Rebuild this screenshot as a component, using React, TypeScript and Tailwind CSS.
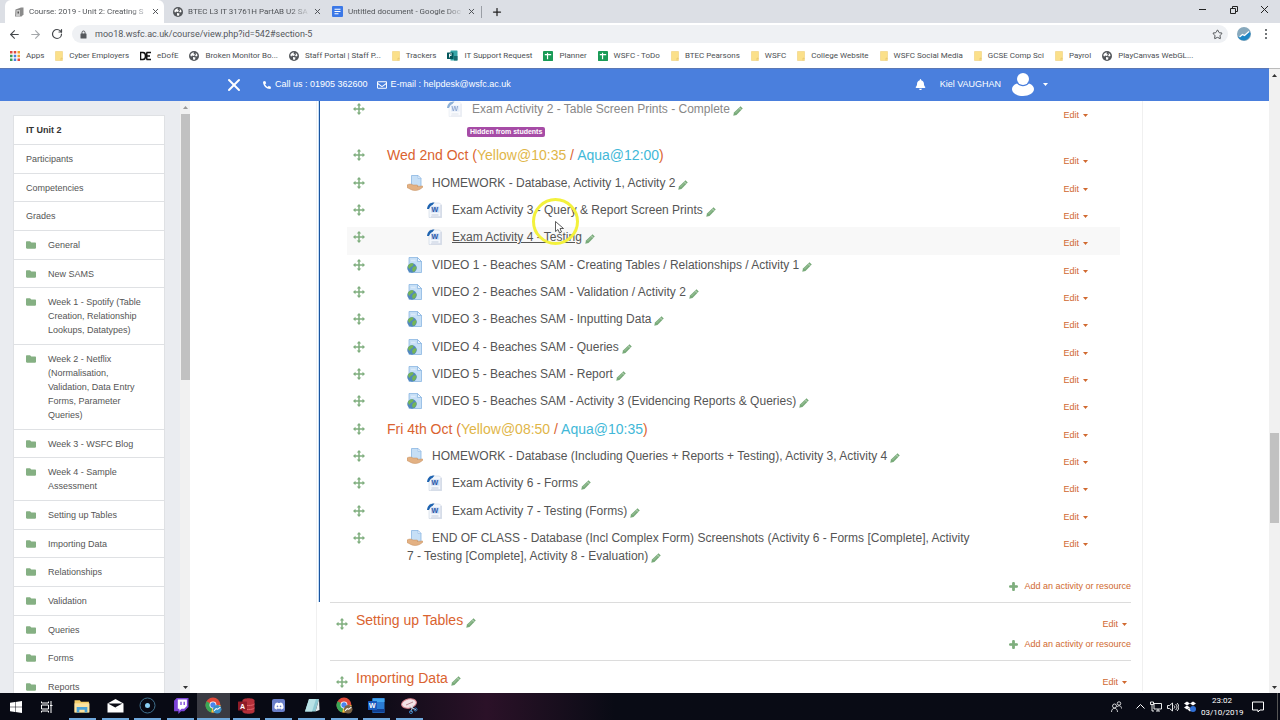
import type { ReactNode } from "react";
import { FaBell, FaFolder, FaPhoneAlt, FaPlus, FaRegEnvelope, FaDiscord } from "react-icons/fa";
import { ArrowLeft, ArrowRight, Plus, RotateCw, Star, X } from "lucide-react";

const uiFont = "font-[Roboto,'Open_Sans',sans-serif]";
const pageFont = "font-['Liberation_Sans',Arial,sans-serif]";

/* ---------- icons ---------- */

function Globe() {
  return (
    <svg viewBox="0 0 20 20" className="size-[10px] shrink-0">
      <circle cx="10" cy="10" r="10" fill="#54575b" />
      <path d="M3 7c2-3 4-4 7-4l-1 3 3 1-2 3-4-1-1 2-2-1zM13 4l3 2 1 4-3 1-2-2 2-2zM8 12l5 1-1 4-3 1-1-3z" fill="#fff" />
    </svg>
  );
}

function BookmarkFolder() {
  return (
    <svg viewBox="0 0 16 20" className="h-[10px] w-[8px] shrink-0">
      <path d="M1 1h14v18H1z" fill="#fbe08a" stroke="#eccb6c" />
      <path d="M12 19v-5l3 1" stroke="#dcb95a" fill="none" />
    </svg>
  );
}

function Sheet() {
  return (
    <svg viewBox="0 0 22 22" className="size-[10px] shrink-0">
      <rect width="22" height="22" rx="1" fill="#1a9b57" />
      <path d="M4 8h14M10 4v14" stroke="#fff" strokeWidth="2.6" />
    </svg>
  );
}

function FormsLogo() {
  return (
    <svg viewBox="0 0 22 22" className="size-[11px] shrink-0">
      <rect x="7" y="1" width="14" height="20" rx="1" fill="#37a6a8" />
      <path d="M14 12h7v8a1 1 0 0 1-1 1h-6z" fill="#1a6d70" />
      <rect x="0" y="5" width="13" height="13" rx="1" fill="#03575b" />
      <path d="M5 15V8h5M5 11h4" stroke="#fff" strokeWidth="1.8" fill="none" />
    </svg>
  );
}

function AppsGrid() {
  const dots = ["#e04a3f", "#e04a3f", "#f0a030", "#3d9b57", "#4a7fdf", "#f0a030", "#3d9b57", "#4a7fdf", "#e04a3f"];
  return (
    <svg viewBox="0 0 20 20" className="size-[10px] shrink-0">
      {dots.map((c, i) => (
        <rect key={i} x={(i % 3) * 7.5} y={Math.floor(i / 3) * 7.5} width="5" height="5" fill={c} />
      ))}
    </svg>
  );
}

function DofE() {
  return (
    <svg viewBox="0 0 22 20" className="h-[10px] w-[11px] shrink-0">
      <path d="M1 3h5a5 7 0 0 1 0 14H1zM13 3h9M13 10h7M13 17h9M13.500 3v14" stroke="#111" strokeWidth="3" fill="none" />
    </svg>
  );
}

function CoursePage() {
  return (
    <svg viewBox="0 0 20 20" className="size-[10px] shrink-0">
      <path d="M3 5 14 1h5v14l-4 4H2z" fill="#8b8b8b" />
      <path d="M5 6h7v12H4z" fill="#c9c9c9" />
      <path d="M7 9h3v4H7z" fill="#555" />
    </svg>
  );
}

function DocsLogo() {
  return (
    <svg viewBox="0 0 22 22" className="size-[11px] shrink-0">
      <rect width="22" height="22" rx="2" fill="#3b78e7" />
      <path d="M5 6.500h12M5 11h12M5 15.500h8" stroke="#fff" strokeWidth="2" />
    </svg>
  );
}

function Padlock() {
  return (
    <svg viewBox="0 0 14 18" className="mr-2 h-[9px] w-[7px] shrink-0">
      <rect x="1" y="7" width="12" height="10" rx="1" fill="#55585c" />
      <path d="M4 8V5a3 3 0 0 1 6 0v3" fill="none" stroke="#55585c" strokeWidth="2" />
    </svg>
  );
}

function Move() {
  return (
    <svg viewBox="0 0 24 24" className="size-[12px] shrink-0 text-[#7fae7e]" fill="currentColor">
      <path d="M12 0 16.500 5H13.500V10.500H19V7.500l5 4.500-5 4.500v-3H13.500V19h3L12 24l-4.500-5h3V13.500H5v3L0 12l5-4.500v3h5.500V5h-3z" />
    </svg>
  );
}

function Pencil() {
  return (
    <svg viewBox="0 0 20 20" className="ml-[3px] inline-block size-[10px] align-[-3px]">
      <path d="M15 .5 19.500 5 7 18 .5 19.500 2 13z" fill="#78aa79" />
      <path d="m5 14 9.500-9.500" stroke="#b4d2b2" strokeWidth="1.400" />
      <path d="m12 3 5 5" stroke="#fff" strokeWidth="1" />
    </svg>
  );
}

function WordFile({ dim }: { dim?: boolean }) {
  return (
    <svg viewBox="0 0 32 32" className={`mr-[9px] inline-block size-[16px] align-[-4px] ${dim ? "opacity-50" : ""}`}>
      <path d="M6 2h19l4 4v25H4V8z" fill="#f4f7fc" stroke="#c3cddd" />
      <path d="M28 6v24H8" stroke="#d3dae6" strokeWidth="3" fill="none" />
      <path d="M0 14C1 5 6 1 15 1L11 6C8 7 6 9 4 14z" fill="#1e63b0" />
      <rect x="8" y="9" width="17" height="12" fill="#c9dbf3" />
      <text x="9" y="20" fontSize="14" fontWeight="bold" fontFamily="Liberation Sans" fill="#2a57a8">W</text>
      <path d="M9 26h14" stroke="#c3cddd" strokeWidth="2" />
    </svg>
  );
}

function UrlFile() {
  return (
    <svg viewBox="0 0 32 32" className="mr-[9px] inline-block size-[16px] align-[-4px]">
      <path d="M4 1h17l8 8v22H4z" fill="#c6dff6" stroke="#86b3e0" strokeWidth="1.500" />
      <path d="M21 1v8h8z" fill="#eef6fd" stroke="#86b3e0" strokeWidth="1.500" />
      <path d="M8 7h9" stroke="#dcebfa" strokeWidth="3" />
      <circle cx="10" cy="22" r="9.500" fill="#5288bd" />
      <path d="M2 18c2-4 6-6 10-5l1 3-3 3-3 1-1 4-3-2zM12 20l6-2 1 4-3 6-4 2-2-5z" fill="#74b556" />
    </svg>
  );
}

function AssignFile() {
  return (
    <svg viewBox="0 0 32 32" className="mr-[9px] inline-block size-[16px] align-[-4px]">
      <path d="M9 1h13l6 6v19H9z" fill="#c6dff6" stroke="#86b3e0" strokeWidth="1.500" />
      <path d="M22 1v6h6z" fill="#eef6fd" stroke="#86b3e0" />
      <path d="M0 20c5-3 9-2 12 0h8c2 0 2 3 0 3l10-1c3 0 2 2 1 3-5 4-9 6-15 6-7 0-11-4-16-6z" fill="#e3b183" stroke="#c58f5f" />
    </svg>
  );
}

function Caret({ className = "" }: { className?: string }) {
  return (
    <svg viewBox="0 0 10 6" className={`h-[3px] w-[5px] shrink-0 ${className}`} fill="currentColor">
      <path d="M0 0h10L5 6z" />
    </svg>
  );
}

function ChromeLogo({ badge }: { badge: string }) {
  return (
    <svg viewBox="0 0 32 32" className="size-[17px]">
      <circle cx="15" cy="15" r="14" fill="#e04a3a" />
      <path d="M15 15 3 8a14 14 0 0 0 9 21z" fill="#3aa757" />
      <path d="M15 15h14a14 14 0 0 1-17 14z" fill="#f7cb3f" />
      <circle cx="15" cy="15" r="6.500" fill="#fff" />
      <circle cx="15" cy="15" r="5" fill="#4a84ee" />
      <circle cx="23" cy="23" r="8" fill={badge} />
      <path d="m17 26 4-4 3 1 5-4" stroke="#fff" strokeWidth="2" fill="none" />
    </svg>
  );
}

/* ---------- browser chrome ---------- */

const tabs = [
  { title: "Course: 2019 - Unit 2: Creating S", icon: <CoursePage />, active: true },
  { title: "BTEC L3 IT 31761H PartAB U2 SA", icon: <Globe /> },
  { title: "Untitled document - Google Doc", icon: <DocsLogo /> },
];

const bookmarks: { label: string; icon: ReactNode }[] = [
  { label: "Apps", icon: <AppsGrid /> },
  { label: "Cyber Employers", icon: <BookmarkFolder /> },
  { label: "eDofE", icon: <DofE /> },
  { label: "Broken Monitor Bo...", icon: <Globe /> },
  { label: "Staff Portal | Staff P...", icon: <Globe /> },
  { label: "Trackers", icon: <BookmarkFolder /> },
  { label: "IT Support Request", icon: <FormsLogo /> },
  { label: "Planner", icon: <Sheet /> },
  { label: "WSFC - ToDo", icon: <Sheet /> },
  { label: "BTEC Pearsons", icon: <BookmarkFolder /> },
  { label: "WSFC", icon: <BookmarkFolder /> },
  { label: "College Website", icon: <BookmarkFolder /> },
  { label: "WSFC Social Media", icon: <BookmarkFolder /> },
  { label: "GCSE Comp Sci", icon: <BookmarkFolder /> },
  { label: "Payrol", icon: <BookmarkFolder /> },
  { label: "PlayCanvas WebGL...", icon: <Globe /> },
];

function BrowserChrome() {
  return (
    <div className={`shrink-0 ${uiFont}`}>
      <div className="flex h-[23px] items-stretch bg-[#dcdfe5] pl-[5px]">
        {tabs.map((t) => (
          <div
            key={t.title}
            className={`flex w-[159px] items-center gap-[5px] pl-[9px] text-[8px] text-[#4a4d51] ${
              t.active ? "rounded-t-md bg-white pr-1" : ""
            }`}
          >
            {t.icon}
            <button className="flex-1 whitespace-nowrap bg-linear-to-r from-[#4a4d51] from-85% to-[#c9ccd1] bg-clip-text text-left text-transparent">
              {t.title}
            </button>
            <button aria-label="Close tab">
              <X className="size-[9px]" strokeWidth={2.500} />
            </button>
            {!t.active && <span className="h-3 w-px bg-[#9a9ea5]" />}
          </div>
        ))}
        <button aria-label="New tab" className="ml-[9px]">
          <Plus className="size-[12px] text-[#222]" strokeWidth={2.500} />
        </button>
        <div className="ml-auto flex items-start gap-5 pr-[10px] pt-1 text-[#222]">
          <button aria-label="Minimise">
            <svg viewBox="0 0 11 11" className="size-[11px]">
              <path d="M2 5.500h7" stroke="currentColor" />
            </svg>
          </button>
          <button aria-label="Restore">
            <svg viewBox="0 0 11 11" className="size-[11px]" fill="none" stroke="currentColor">
              <path d="M2.500 4.500h5v5h-5zM4.500 4V2.500h5v5H8" />
            </svg>
          </button>
          <button aria-label="Close">
            <svg viewBox="0 0 11 11" className="size-[11px]">
              <path d="m2 2 7 7m0-7-7 7" stroke="currentColor" />
            </svg>
          </button>
        </div>
      </div>

      <div className="flex h-[22px] items-center bg-white pl-2 pr-3 text-[#45484c]">
        <button aria-label="Back" className="mr-2">
          <ArrowLeft className="size-[13px]" />
        </button>
        <button aria-label="Forward" className="mr-[9px]">
          <ArrowRight className="size-[13px] text-[#a5a8ab]" />
        </button>
        <button aria-label="Reload">
          <RotateCw className="size-[12px]" strokeWidth={2.400} />
        </button>
        <div className="ml-[9px] mr-[9px] flex h-[18px] flex-1 items-center rounded-full bg-[#eff1f4] pl-2 pr-[5px]">
          <Padlock />
          <label className="flex flex-1 items-center text-[9px] leading-4">
            <span className="sr-only">Address</span>
            <input
              className="h-4 w-full bg-transparent text-[#55585c] outline-none"
              defaultValue="moo18.wsfc.ac.uk/course/view.php?id=542#section-5"
            />
          </label>
          <Star className="size-[11px]" />
        </div>
        <svg viewBox="0 0 28 28" className="size-[14px]">
          <circle cx="14" cy="14" r="14" fill="#88a9bd" />
          <path d="M2 20 11 16l4 2 9-9 3 3a14 14 0 0 1-22 12z" fill="#1e86c5" />
          <path d="m5 20 6-5 4 2 9-8" stroke="#fff" strokeWidth="2.500" fill="none" />
        </svg>
        <button aria-label="Menu" className="ml-3 flex w-[5px] flex-col items-center gap-[2px]">
          <span className="size-[2px] rounded-full bg-[#45484c]" />
          <span className="size-[2px] rounded-full bg-[#45484c]" />
          <span className="size-[2px] rounded-full bg-[#45484c]" />
        </button>
      </div>

      <nav className="flex h-[23px] items-center gap-[11px] overflow-hidden bg-white pb-[2px] pl-[10px] text-[8px] text-[#4c4f53]">
        {bookmarks.map((b) => (
          <a key={b.label} href="#" className="flex items-center gap-[6px] whitespace-nowrap">
            {b.icon}
            {b.label}
          </a>
        ))}
      </nav>
    </div>
  );
}

/* ---------- course page ---------- */

function SiteHeader() {
  return (
    <header className="flex h-[33px] shrink-0 items-center border-t border-[#5b78b5] bg-[#4a7fdd] pb-px text-[9px] text-white">
      <button aria-label="Close menu" className="ml-[224px]">
        <X className="size-[20px]" strokeWidth={2.400} />
      </button>
      <a href="#" className="ml-[19px] flex items-center gap-[4px]">
        <FaPhoneAlt className="size-[8px]" />
        Call us : 01905 362600
      </a>
      <a href="#" className="ml-[9px] flex items-center gap-[4px]">
        <FaRegEnvelope className="size-[10px]" />
        E-mail : helpdesk@wsfc.ac.uk
      </a>
      <div className="ml-auto mr-[221px] flex items-center">
        <button aria-label="Notifications">
          <FaBell className="size-[11px]" />
        </button>
        <button className="ml-[14px] flex items-center">
          Kiel VAUGHAN
          <svg viewBox="0 0 44 46" className="ml-[11px] h-[23px] w-[22px]" fill="#fff">
            <circle cx="22" cy="12" r="12" />
            <path d="M10 21c7 7 17 7 24 0 7 2 10 7 10 11 0 8-10 14-22 14S0 40 0 32c0-4 3-9 10-11z" />
          </svg>
          <Caret className="ml-[9px]" />
        </button>
      </div>
    </header>
  );
}

const plainLinks = ["IT Unit 2", "Participants", "Competencies", "Grades"];
const folderLinks = [
  "General",
  "New SAMS",
  "Week 1 - Spotify (Table Creation, Relationship Lookups, Datatypes)",
  "Week 2 - Netflix (Normalisation, Validation, Data Entry Forms, Parameter Queries)",
  "Week 3 - WSFC Blog",
  "Week 4 - Sample Assessment",
  "Setting up Tables",
  "Importing Data",
  "Relationships",
  "Validation",
  "Queries",
  "Forms",
  "Reports",
];

function Sidebar() {
  return (
    <aside className="flex w-[190px] shrink-0 overflow-hidden bg-[#eaecf0]">
      <ul className="ml-[13px] mr-[15px] mt-[14px] w-[152px] self-start border border-[#dfe1e4] bg-white text-[9px] leading-[14px] text-[#555]">
        {plainLinks.map((l, i) => (
          <li key={l} className="border-b border-[#dfe1e4] py-[7px] pl-3 nth-[3n]:pb-[6px]">
            <a href="#" className={i === 0 ? "font-bold text-[#333]" : ""}>{l}</a>
          </li>
        ))}
        {folderLinks.map((l) => (
          <li key={l} className="border-b border-[#dfe1e4] py-[7px] pl-3 nth-[3n]:pb-[6px]">
            <a href="#" className="flex pr-4">
              <FaFolder className="mr-3 mt-[2px] size-[10px] shrink-0 text-[#85b083]" />
              {l}
            </a>
          </li>
        ))}
      </ul>
      <div className="flex w-[10px] flex-col items-center bg-[#f1f1f1] text-[#333]">
        <Caret className="my-[5px] rotate-180 text-[#999]" />
        <div className="h-[266px] w-[9px] bg-[#c1c1c1]" />
        <Caret className="mb-1 mt-auto" />
      </div>
    </aside>
  );
}

type Activity = {
  kind: "word" | "url" | "assign" | "label";
  text: ReactNode;
  indent: "pl-[22px]" | "pl-[42px]" | "pl-[62px]" | "pl-[82px]";
  hidden?: boolean;
  hover?: boolean;
};

function DayHeading({ day, yellow, aqua }: { day: string; yellow: string; aqua: string }) {
  return (
    <span className="text-[14px] text-[#da6330]">
      {day} (<span className="text-[#dfb648]">Yellow@{yellow}</span> / <span className="text-[#42b8d8]">Aqua@{aqua}</span>)
    </span>
  );
}

const activities: Activity[] = [
  { kind: "word", indent: "pl-[82px]", text: "Exam Activity 2 - Table Screen Prints - Complete", hidden: true },
  { kind: "label", indent: "pl-[22px]", text: <DayHeading day="Wed 2nd Oct" yellow="10:35" aqua="12:00" /> },
  { kind: "assign", indent: "pl-[42px]", text: "HOMEWORK - Database, Activity 1, Activity 2" },
  { kind: "word", indent: "pl-[62px]", text: "Exam Activity 3 - Query & Report Screen Prints" },
  { kind: "word", indent: "pl-[62px]", text: "Exam Activity 4 - Testing", hover: true },
  { kind: "url", indent: "pl-[42px]", text: "VIDEO 1 - Beaches SAM - Creating Tables / Relationships / Activity 1" },
  { kind: "url", indent: "pl-[42px]", text: "VIDEO 2 - Beaches SAM - Validation / Activity 2" },
  { kind: "url", indent: "pl-[42px]", text: "VIDEO 3 - Beaches SAM - Inputting Data" },
  { kind: "url", indent: "pl-[42px]", text: "VIDEO 4 - Beaches SAM - Queries" },
  { kind: "url", indent: "pl-[42px]", text: "VIDEO 5 - Beaches SAM - Report" },
  { kind: "url", indent: "pl-[42px]", text: "VIDEO 5 - Beaches SAM - Activity 3 (Evidencing Reports & Queries)" },
  { kind: "label", indent: "pl-[22px]", text: <DayHeading day="Fri 4th Oct" yellow="08:50" aqua="10:35" /> },
  { kind: "assign", indent: "pl-[42px]", text: "HOMEWORK - Database (Including Queries + Reports + Testing), Activity 3, Activity 4" },
  { kind: "word", indent: "pl-[62px]", text: "Exam Activity 6 - Forms" },
  { kind: "word", indent: "pl-[62px]", text: "Exam Activity 7 - Testing (Forms)" },
  {
    kind: "assign",
    indent: "pl-[42px]",
    text: "END OF CLASS - Database (Incl Complex Form) Screenshots (Activity 6 - Forms [Complete], Activity 7 - Testing [Complete], Activity 8 - Evaluation)",
  },
];

function EditButton() {
  return (
    <button className="flex items-center gap-[4px] text-[9px] leading-[18px] text-[#d0692f]">
      Edit <Caret />
    </button>
  );
}

function ActivityRow({ a }: { a: Activity }) {
  return (
    <li className={`flex min-h-[27px] items-start pl-[6px] pr-8 nth-[3n+2]:min-h-[28px] ${a.hover ? "bg-[#f8f8f8]" : ""}`}>
      <button aria-label="Move" className="flex h-[19px] w-3 items-center">
        <Move />
      </button>
      <div className={`max-w-[612px] flex-1 pt-px text-[12px] leading-[18px] text-[#555] ${a.indent}`}>
        {a.kind === "label" ? (
          a.text
        ) : (
          <>
            <a href="#" className={a.hidden ? "text-[#888]" : ""}>
              {a.kind === "word" && <WordFile dim={a.hidden} />}
              {a.kind === "url" && <UrlFile />}
              {a.kind === "assign" && <AssignFile />}
              <span className={a.hover ? "underline" : ""}>{a.text}</span>
            </a>
            <Pencil />
          </>
        )}
        {a.hidden && (
          <div className="mb-2 ml-5 mt-[9px] w-fit rounded-xs bg-[#a64ca6] px-[3px] text-[7px] font-bold leading-[10px] text-white">
            Hidden from students
          </div>
        )}
      </div>
      <div className="ml-auto pt-[7px]">
        <EditButton />
      </div>
    </li>
  );
}

function AddActivity() {
  return (
    <a href="#" className="flex items-center justify-end gap-[6px] text-[9px] leading-[16px] text-[#d0692f]">
      <FaPlus className="size-[9px] text-[#7fae7e]" strokeWidth={60} stroke="currentColor" />
      Add an activity or resource
    </a>
  );
}

function CollapsedSection({ title }: { title: string }) {
  return (
    <section className="ml-[13px] mr-[11px] h-[58px] border-t border-[#dcdcdc] pl-[6px] pt-[7px]">
      <div className="flex items-start">
        <button aria-label="Move" className="mt-2">
          <Move />
        </button>
        <h3 className="ml-2 text-[14px] leading-5 text-[#da6330]">
          <a href="#">{title}</a>
          <Pencil />
        </h3>
        <div className="ml-auto mr-1 pt-[5px]">
          <EditButton />
        </div>
      </div>
      <div className="mt-[3px]">
        <AddActivity />
      </div>
    </section>
  );
}

function CoursePanel() {
  return (
    <main className="min-w-0 flex-1 overflow-hidden bg-white">
      <div className="mx-auto h-full w-full max-w-[827px] border-x border-[#f0f0f0]">
        <section className="-mt-[2px] ml-[2px] border-l border-[#1c559f] pb-2 pl-[27px] pr-[11px] shadow-[-1px_0_0_#c4def8]">
          <ul className="mr-[11px]">
            {activities.map((a, i) => (
              <ActivityRow key={i} a={a} />
            ))}
          </ul>
          <div className="mt-[13px]">
            <AddActivity />
          </div>
        </section>
        <CollapsedSection title="Setting up Tables" />
        <CollapsedSection title="Importing Data" />
      </div>
    </main>
  );
}

/* ---------- taskbar ---------- */

const apps: { name: string; icon: ReactNode; active?: boolean }[] = [
  {
    name: "File Explorer",
    icon: (
      <svg viewBox="0 0 30 26" className="h-[14px] w-[16px]">
        <path d="M1 2h10l2 3h15v20H1z" fill="#f5cf6a" />
        <path d="M1 8h28v17H1z" fill="#fbe3a0" />
        <path d="M5 15h20v10h-5v-5H10v5H5z" fill="#4aa3d8" />
      </svg>
    ),
  },
  {
    name: "Mail",
    icon: (
      <svg viewBox="0 0 34 28" className="h-[14px] w-[17px]">
        <path d="M1 9 17 0l16 9v18H1z" fill="#fff" />
        <path d="M2 9h29L16 17l6 3z" fill="#0a0c16" />
      </svg>
    ),
  },
  {
    name: "Recorder",
    icon: (
      <svg viewBox="0 0 34 34" className="size-[17px]">
        <circle cx="17" cy="17" r="15" fill="none" stroke="#3f6f8c" strokeWidth="2" />
        <circle cx="17" cy="17" r="5" fill="#8ad0f4" />
      </svg>
    ),
  },
  {
    name: "Twitch",
    icon: (
      <svg viewBox="0 0 28 30" className="size-[16px]">
        <path d="M6 0h22v17l-8 8h-6l-5 5v-5H1V5z" fill="#7d45d8" />
        <path d="M8 3h17v12l-5 5h-5l-4 4v-4H8z" fill="#fff" />
        <path d="M14 7v6M20 7v6" stroke="#7d45d8" strokeWidth="2.500" />
      </svg>
    ),
  },
  { name: "Chrome", icon: <ChromeLogo badge="#3a90c8" />, active: true },
  {
    name: "Access",
    icon: (
      <svg viewBox="0 0 34 32" className="h-[16px] w-[17px]">
        <path d="M9 5c0-6 24-6 24 0v22c0 6-24 6-24 0z" fill="#b5303a" />
        <path d="M9 12c4 4 20 4 24 0M9 20c4 4 20 4 24 0" stroke="#e0656c" strokeWidth="2" fill="none" />
        <rect y="7" width="18" height="18" rx="1" fill="#8e1c28" />
        <text x="4" y="21" fontSize="14" fontWeight="bold" fontFamily="Liberation Sans" fill="#fff">A</text>
      </svg>
    ),
  },
  {
    name: "Discord",
    icon: (
      <span className="flex size-[13px] items-center justify-center rounded-xs bg-[#6a7fc9]">
        <FaDiscord className="size-[10px] text-white" />
      </span>
    ),
  },
  {
    name: "Notepad",
    icon: (
      <svg viewBox="0 0 32 30" className="h-[15px] w-[16px]">
        <path d="M10 2h20l-7 25H2z" fill="#8fc9d3" />
        <path d="M10 2h14L16 27H2z" fill="#b9e2e6" />
        <path d="m30 2 1 22-8 3z" fill="#e7eef0" />
      </svg>
    ),
  },
  { name: "Chrome profile", icon: <ChromeLogo badge="#7a6446" /> },
  {
    name: "Word",
    icon: (
      <svg viewBox="0 0 34 30" className="h-[15px] w-[17px]">
        <rect x="9" width="24" height="30" rx="1" fill="#2b7cd3" />
        <path d="M9 1h24v7H9z" fill="#41a5ee" />
        <path d="M9 22h24v7H9z" fill="#103f91" />
        <rect y="6" width="18" height="18" rx="1" fill="#185abd" />
        <text x="2" y="20" fontSize="14" fontWeight="bold" fontFamily="Liberation Sans" fill="#fff">W</text>
      </svg>
    ),
  },
  {
    name: "Snipping Tool",
    icon: (
      <svg viewBox="0 0 34 32" className="h-[16px] w-[17px]">
        <ellipse cx="16" cy="11" rx="15" ry="9" fill="#f3e4e6" stroke="#d9808a" strokeWidth="2" transform="rotate(-12 16 11)" />
        <path d="m10 14 14-6" stroke="#b98a92" strokeWidth="2" />
        <path d="m16 16 14 8M24 14l-4 14" stroke="#cfd8e0" strokeWidth="2" />
        <circle cx="20" cy="28" r="3" fill="none" stroke="#3a7fc0" strokeWidth="2" />
        <circle cx="29" cy="23" r="3" fill="none" stroke="#3a7fc0" strokeWidth="2" />
      </svg>
    ),
  },
];

function Taskbar() {
  return (
    <footer className="flex h-[27px] shrink-0 items-stretch bg-linear-to-r from-[#080a14] from-28% via-[#2b1128] via-38% to-[#090b15] to-48% text-white">
      <button aria-label="Start" className="flex w-8 items-center justify-center">
        <svg viewBox="0 0 24 24" className="size-[12px]" fill="#fff">
          <path d="M0 3.500 10 2v9.500H0zM11 2l13-2v11.500H11zM0 12.500h10V22L0 20.500zM11 12.500h13V24l-13-2z" />
        </svg>
      </button>
      <button aria-label="Task view" className="flex w-[34px] items-center justify-center pr-1">
        <svg viewBox="0 0 24 24" className="size-[12px]" fill="none" stroke="#fff" strokeWidth="2">
          <path d="M1 1v3h14V1M1 8h14v8H1zM1 23v-3h14v3M20 0v24M18 9h5" />
        </svg>
      </button>
      <div className="flex w-[360px]">
        {apps.map((a) => (
          <button
            key={a.name}
            aria-label={a.name}
            className={`flex flex-1 basis-0 flex-col items-center justify-between ${a.active ? "bg-[#3a3b43]" : ""}`}
          >
            <span className="flex h-[25px] items-center">{a.icon}</span>
            <span className={`h-[2px] bg-[#6fa8dc] ${a.active ? "w-full" : "w-[27px]"}`} />
          </button>
        ))}
      </div>
      <div className={`ml-auto flex items-center gap-[5px] text-[8px] leading-3 ${uiFont}`}>
        <svg viewBox="0 0 22 22" className="mr-[9px] size-[11px]" fill="none" stroke="#fff" strokeWidth="1.600">
          <circle cx="7" cy="10" r="4" />
          <path d="M1 22c0-10 12-10 12 0" />
          <circle cx="16" cy="5" r="3.500" />
          <path d="M12 12c3-4 9-3 9 3" />
        </svg>
        <svg viewBox="0 0 18 10" className="h-[5px] w-[9px]" fill="none" stroke="#fff" strokeWidth="2">
          <path d="m1 9 8-8 8 8" />
        </svg>
        <svg viewBox="0 0 24 22" className="h-[11px] w-[12px]" fill="none" stroke="#fff" strokeWidth="1.800">
          <path d="M8 5h15v11H8zM12 20h8M16 16v4M1 2h6v5H1zM4 7v13h4" />
        </svg>
        <svg viewBox="0 0 24 20" className="h-[10px] w-[12px]" fill="none" stroke="#fff" strokeWidth="1.800">
          <path d="M1 7h4l6-5v16l-6-5H1zM14 7c2 2 2 4 0 6M17 4c4 4 4 8 0 12M20 2c5 5 5 11 0 16" />
        </svg>
        <svg viewBox="0 0 24 22" className="h-[11px] w-[12px]">
          <path d="m6 1 6 4-6 4-6-4zM18 1l6 4-6 4-6-4zM6 9l6 4-6 4-6-4zM12 14l5 3-5 4-5-4z" fill="#fff" />
          <circle cx="18" cy="16" r="6" fill="#2f6fd6" />
        </svg>
        <div className="w-[42px] text-center">
          <div>23:02</div>
          <div>03/10/2019</div>
        </div>
        <svg viewBox="0 0 24 24" className="ml-1 mr-2 size-[12px]" fill="none" stroke="#fff" strokeWidth="2">
          <path d="M1 2h22v16h-7l-4 4v-4H1z" />
        </svg>
        <div className="h-[27px] w-[3px] border-l border-[#555]" />
      </div>
    </footer>
  );
}

export default function App() {
  return (
    <div className={`relative flex h-screen w-full flex-col overflow-hidden bg-white ${pageFont}`}>
      <BrowserChrome />
      <div className="flex min-h-0 flex-1">
        <div className="flex min-w-0 flex-1 flex-col">
          <SiteHeader />
          <div className="flex min-h-0 flex-1">
            <Sidebar />
            <CoursePanel />
          </div>
        </div>
        <div className="flex w-[11px] flex-col items-center border-t border-[#bbb] bg-[#f1f1f1] text-[#333]">
          <Caret className="mt-[5px] rotate-180" />
          <div className="mt-[356px] h-[90px] w-[9px] bg-[#c1c1c1]" />
          <Caret className="mb-1 mt-auto" />
        </div>
      </div>
      <Taskbar />

      {/* pointer with click highlight */}
      <div className="pointer-events-none absolute left-[532px] top-[198px] size-[47px] rounded-full border-3 border-[#f3f13c]">
        <svg viewBox="0 0 18 26" className="ml-[20px] mt-[20px] h-[13px] w-[9px]">
          <path d="M1 1v20l5-4 3 7 4-2-3-7h7z" fill="#fff" stroke="#333" strokeWidth="1.600" />
        </svg>
      </div>
    </div>
  );
}
